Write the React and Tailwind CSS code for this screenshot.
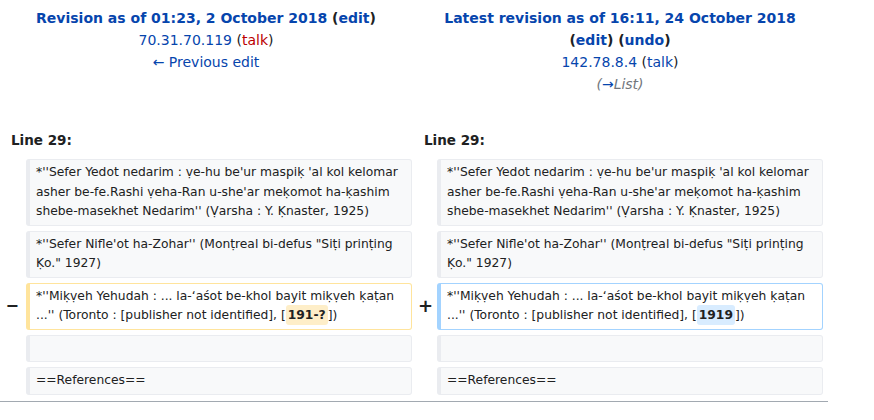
export default function App() {
  const ctx = "rounded-[3px] border border-[#eaecf0] border-l-4 bg-[#f8f9fa] px-[6px] py-[3px] min-h-[27px]";
  return (
    <div className="w-[874px] h-[420px] bg-white text-[#202122] overflow-hidden" style={{ fontFamily: '"DejaVu Sans", sans-serif' }}>
      <div className="w-[828px]">
        <div className="grid grid-cols-[412px_416px] pt-[7px] text-[14px] leading-[22px] text-center">
          <div>
            <div className="font-bold">
              <span className="text-[#0645ad]">Revision as of 01:23, 2 October 2018</span>{" "}
              <span>(<span className="text-[#0645ad]">edit</span>)</span>
            </div>
            <div>
              <span className="text-[#0645ad]">70.31.70.119</span> (<span className="text-[#ba0000]">talk</span>)
            </div>
            <div className="text-[#0645ad]">← Previous edit</div>
          </div>
          <div>
            <div className="font-bold text-[#0645ad]">Latest revision as of 16:11, 24 October 2018</div>
            <div className="font-bold">
              (<span className="text-[#0645ad]">edit</span>) (<span className="text-[#0645ad]">undo</span>)
            </div>
            <div>
              <span className="text-[#0645ad]">142.78.8.4</span> (<span className="text-[#0645ad]">talk</span>)
            </div>
            <div className="italic text-[#72777d]">
              (<span className="text-[#0645ad]">→</span>List)
            </div>
          </div>
        </div>

        <div className="grid grid-cols-[412px_416px] mt-[35px] text-[13.5px] leading-[20px] font-bold">
          <div className="pl-[11px]">Line 29:</div>
          <div className="pl-[12px]">Line 29:</div>
        </div>

        <div className="mt-[9px] grid grid-cols-[26px_386px_25px_386px] gap-y-[5px] text-[12.3px] leading-[19.5px]">
          <div />
          <div className={ctx}>*''Sefer Yedot nedarim : ṿe-hu be'ur maspiḳ 'al kol kelomar asher be-fe.Rashi ṿeha-Ran u-she'ar meḳomot ha-ḳashim shebe-masekhet Nedarim'' (Ṿarsha : Y. Ḳnaster, 1925)</div>
          <div />
          <div className={ctx}>*''Sefer Yedot nedarim : ṿe-hu be'ur maspiḳ 'al kol kelomar asher be-fe.Rashi ṿeha-Ran u-she'ar meḳomot ha-ḳashim shebe-masekhet Nedarim'' (Ṿarsha : Y. Ḳnaster, 1925)</div>

          <div />
          <div className={ctx}>*''Sefer Nifle'ot ha-Zohar'' (Monṭreal bi-defus "Siṭi prinṭing Ḳo." 1927)</div>
          <div />
          <div className={ctx}>*''Sefer Nifle'ot ha-Zohar'' (Monṭreal bi-defus "Siṭi prinṭing Ḳo." 1927)</div>

          <div className="flex items-center justify-end pr-[7px] font-bold text-[16px]">−</div>
          <div className="rounded-[3px] border border-[#ffe49c] border-l-4 bg-white px-[6px] py-[3px]">
            *''Miḳṿeh Yehudah : ... la-ʻaśot be-khol bayit miḳṿeh ḳaṭan ...'' (Toronto : [publisher not identified], [<span className="font-bold bg-[#feeec8] rounded-[3px] px-[2px] py-[3px]">191-?</span>])
          </div>
          <div className="flex items-center justify-end pr-[4px] font-bold text-[18px]">+</div>
          <div className="rounded-[3px] border border-[#a3d3ff] border-l-4 bg-white px-[6px] py-[3px]">
            *''Miḳṿeh Yehudah : ... la-ʻaśot be-khol bayit miḳṿeh ḳaṭan ...'' (Toronto : [publisher not identified], [<span className="font-bold bg-[#d8ecff] rounded-[3px] px-[2px] py-[3px]">1919</span>])
          </div>

          <div />
          <div className={ctx}>&nbsp;</div>
          <div />
          <div className={ctx}>&nbsp;</div>

          <div />
          <div className={ctx}>==References==</div>
          <div />
          <div className={ctx}>==References==</div>
        </div>
        <div className="mt-[6px] border-b border-[#a2a9b1]" />
      </div>
    </div>
  );
}
